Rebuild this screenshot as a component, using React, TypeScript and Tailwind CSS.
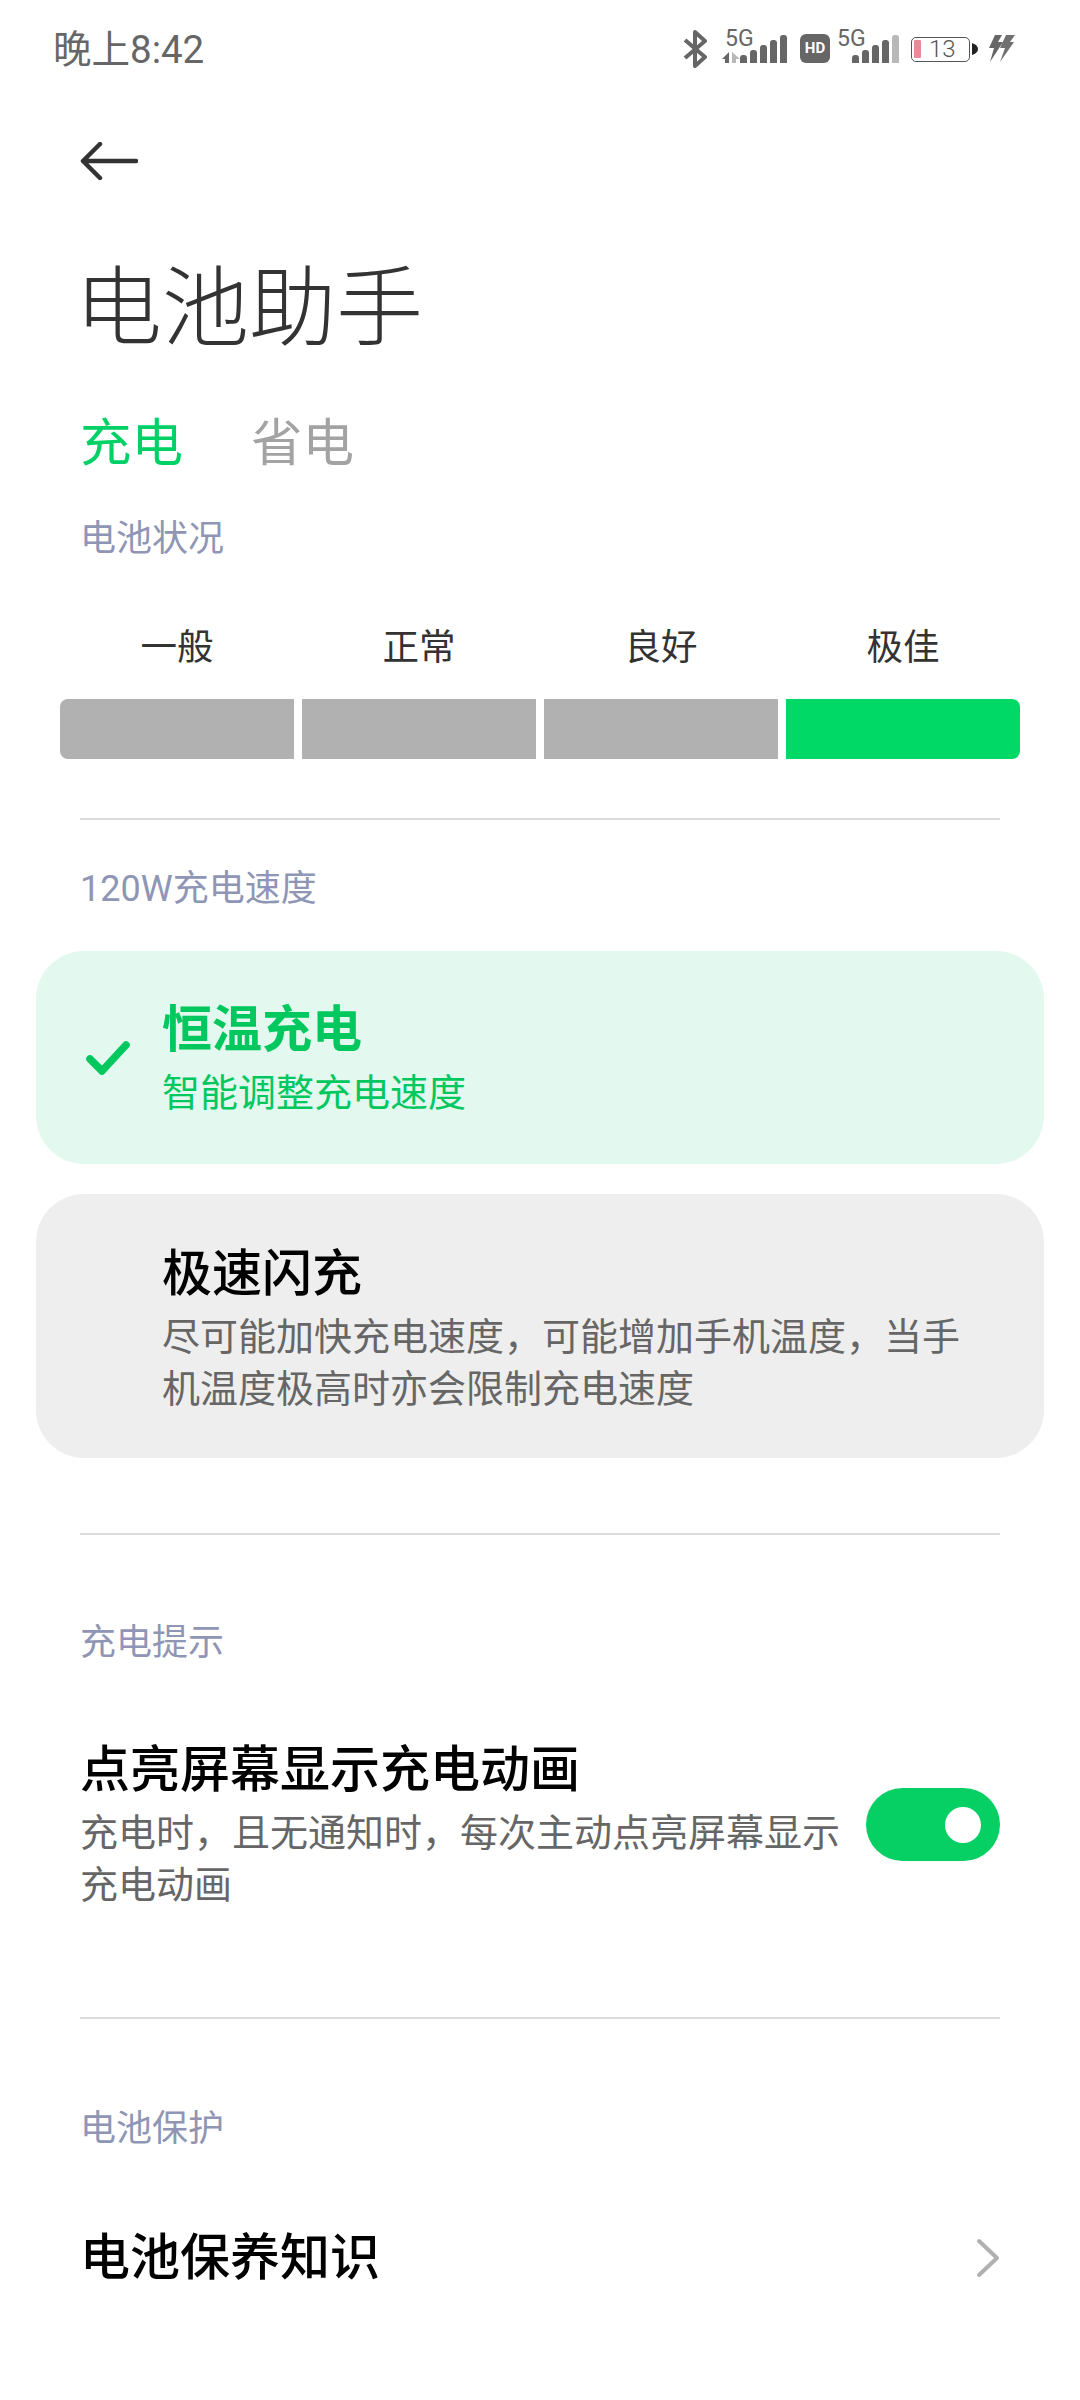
const FONT = "font-['Roboto','Noto_Sans_CJK_SC',sans-serif]";

function Signal({ levels, dim }: { levels: number[]; dim?: number }) {
  return (
    <div className="flex items-end gap-[3px]">
      {levels.map((h, i) => (
        <div
          key={i}
          className={`w-[7px] rounded-t-[3px] ${i === dim ? 'bg-[#b8b8b8]' : 'bg-[#666666]'}`}
          style={{ height: h }}
        />
      ))}
    </div>
  );
}

function StatusBar() {
  return (
    <div className="flex h-[69px] items-end justify-between pl-[53px] pr-[65px]">
      <div className="h-[38px] text-[38.5px] leading-[38px] text-[#666666]">晚上8:42</div>
      <div className="flex h-[40px] items-center">
        <svg width="24" height="38" viewBox="0 0 24 38" fill="none" stroke="#666666" strokeWidth="4" strokeLinejoin="round">
          <path d="M2 10 L22 27 L12 36 V2 L22 11 L2 28" />
        </svg>
        <div className="relative ml-[15px] h-[40px] w-[65px]">
          <span className="absolute left-[3px] top-[-1px] text-[23px] leading-[22px] text-[#666666]">5G</span>
          <svg className="absolute bottom-[6px] left-0" width="18" height="11" viewBox="0 0 18 11">
            <path d="M7 0 V11 H3 V7 H0 Z" fill="#666666" />
            <path d="M10 11 V0 L18 7 H14 V11 Z" fill="#b8b8b8" />
          </svg>
          <div className="absolute bottom-[6px] right-0">
            <Signal levels={[8, 13, 18, 23, 28]} />
          </div>
        </div>
        <div className="ml-[13px] mt-[-1px] flex h-[29px] w-[30px] items-center justify-center rounded-[6px] bg-[#666666] text-[15px] font-bold leading-none text-white">
          HD
        </div>
        <div className="relative ml-[7px] h-[40px] w-[62px]">
          <span className="absolute left-0 top-[-1px] text-[23px] leading-[22px] text-[#666666]">5G</span>
          <div className="absolute bottom-[6px] right-0">
            <Signal levels={[8, 13, 18, 23, 28]} dim={4} />
          </div>
        </div>
        <div className="ml-[12px] flex h-[25px] w-[59px] items-center rounded-[5px] border-[1.5px] border-[#555555] pl-[2px]">
          <div className="h-[18px] w-[7px] rounded-[1px] bg-[#e98a9a]" />
          <span className="ml-[8px] text-[24px] font-light leading-none text-[#555555]">13</span>
        </div>
        <svg className="ml-[2px]" width="6" height="12" viewBox="0 0 6 12">
          <path d="M0 0 Q6 2 6 6 Q6 10 0 12 Z" fill="#222222" />
        </svg>
        <svg className="ml-[10px] mt-[-2px]" width="27" height="27" viewBox="0 0 27 27">
          <path d="M7 0 H14 L10 7 H15 L2 27 L6 13 H1 Z" fill="#666666" />
          <path d="M18 0 H27 L22 7 H26 L12 27 L17 13 H12 Z" fill="#707070" />
        </svg>
      </div>
    </div>
  );
}

function SectionLabel({ children, className }: { children: string; className: string }) {
  return <div className={`px-[80px] text-[36px] leading-[44px] text-[#8f96b5] ${className}`}>{children}</div>;
}

function Divider({ className }: { className: string }) {
  return <div className={`mx-[80px] h-[2px] bg-[#dcdcdc] ${className}`} />;
}

const LEVELS = ['一般', '正常', '良好', '极佳'];

export default function App() {
  return (
    <div className={`h-[2400px] w-[1080px] overflow-hidden bg-white ${FONT}`}>
      <StatusBar />

      <div className="ml-[80px] mt-[73px]">
        <svg width="58" height="38" viewBox="0 0 58 38" fill="none" stroke="#333333" strokeWidth="4.5" strokeLinecap="round" strokeLinejoin="round">
          <path d="M56 19 H3 M20 2 L3 19 L20 36" />
        </svg>
      </div>

      <h1 className="mt-[79px] h-[100px] pl-[75px] text-[87px] font-light leading-[100px] text-[#333333]">电池助手</h1>

      <div className="mt-[55px] flex h-[60px] gap-[68px] pl-[80px] text-[51.5px] leading-[60px]">
        <span className="text-[#00d166]">充电</span>
        <span className="text-[#a3a3a3]">省电</span>
      </div>

      <SectionLabel className="mt-[43px]">电池状况</SectionLabel>

      <div className="mt-[65px] flex gap-[8px] px-[60px]">
        {LEVELS.map((l) => (
          <div key={l} className="flex-1 text-center text-[36.5px] leading-[44px] text-[#333333]">
            {l}
          </div>
        ))}
      </div>

      <div className="mt-[29px] flex h-[60px] gap-[8px] px-[60px]">
        <div className="flex-1 rounded-l-[8px] bg-[#b0b1b0]" />
        <div className="flex-1 bg-[#b0b1b0]" />
        <div className="flex-1 bg-[#b0b1b0]" />
        <div className="flex-1 rounded-r-[8px] bg-[#00d966]" />
      </div>

      <Divider className="mt-[59px]" />

      <SectionLabel className="mt-[47px]">120W充电速度</SectionLabel>

      <div className="mx-[36px] mt-[40px] flex h-[213px] items-center rounded-[48px] bg-[#e3f8ee]">
        <svg className="ml-[50px] shrink-0" width="44" height="36" viewBox="0 0 44 36" fill="none" stroke="#00c85f" strokeWidth="7.5" strokeLinecap="round" strokeLinejoin="round">
          <path d="M4 19 L16 31 L40 5" />
        </svg>
        <div className="ml-[32px] pt-[3px]">
          <div className="text-[50px] font-bold leading-[64px] text-[#00c85f]">恒温充电</div>
          <div className="mt-[4px] text-[38px] leading-[54px] text-[#00c85f]">智能调整充电速度</div>
        </div>
      </div>

      <div className="mx-[36px] mt-[30px] h-[264px] rounded-[48px] bg-[#eeeeee] pl-[126px] pr-[70px] pt-[48px]">
        <div className="text-[50px] font-medium leading-[64px] text-black">极速闪充</div>
        <div className="mt-[5px] text-[38px] leading-[52px] text-[#666666]">
          尽可能加快充电速度，可能增加手机温度，当手机温度极高时亦会限制充电速度
        </div>
      </div>

      <Divider className="mt-[75px]" />

      <SectionLabel className="mt-[86px]">充电提示</SectionLabel>

      <div className="mt-[73px] flex items-center justify-between px-[80px]">
        <div className="w-[770px]">
          <div className="text-[50px] font-medium leading-[64px] text-black">点亮屏幕显示充电动画</div>
          <div className="mt-[5px] text-[38px] leading-[52px] text-[#666666]">充电时，且无通知时，每次主动点亮屏幕显示充电动画</div>
        </div>
        <div className="flex h-[73px] w-[134px] items-center justify-end rounded-full bg-[#06cf64] pr-[19px]">
          <div className="h-[36px] w-[36px] rounded-full bg-white" />
        </div>
      </div>

      <Divider className="mt-[106px]" />

      <SectionLabel className="mt-[88px]">电池保护</SectionLabel>

      <div className="mt-[75px] flex h-[64px] items-center justify-between px-[80px]">
        <span className="text-[50px] font-medium leading-[64px] text-black">电池保养知识</span>
        <svg width="24" height="40" viewBox="0 0 24 40" fill="none" stroke="#b0b0b0" strokeWidth="4" strokeLinecap="round" strokeLinejoin="round">
          <path d="M3 3 L21 20 L3 37" />
        </svg>
      </div>
    </div>
  );
}
